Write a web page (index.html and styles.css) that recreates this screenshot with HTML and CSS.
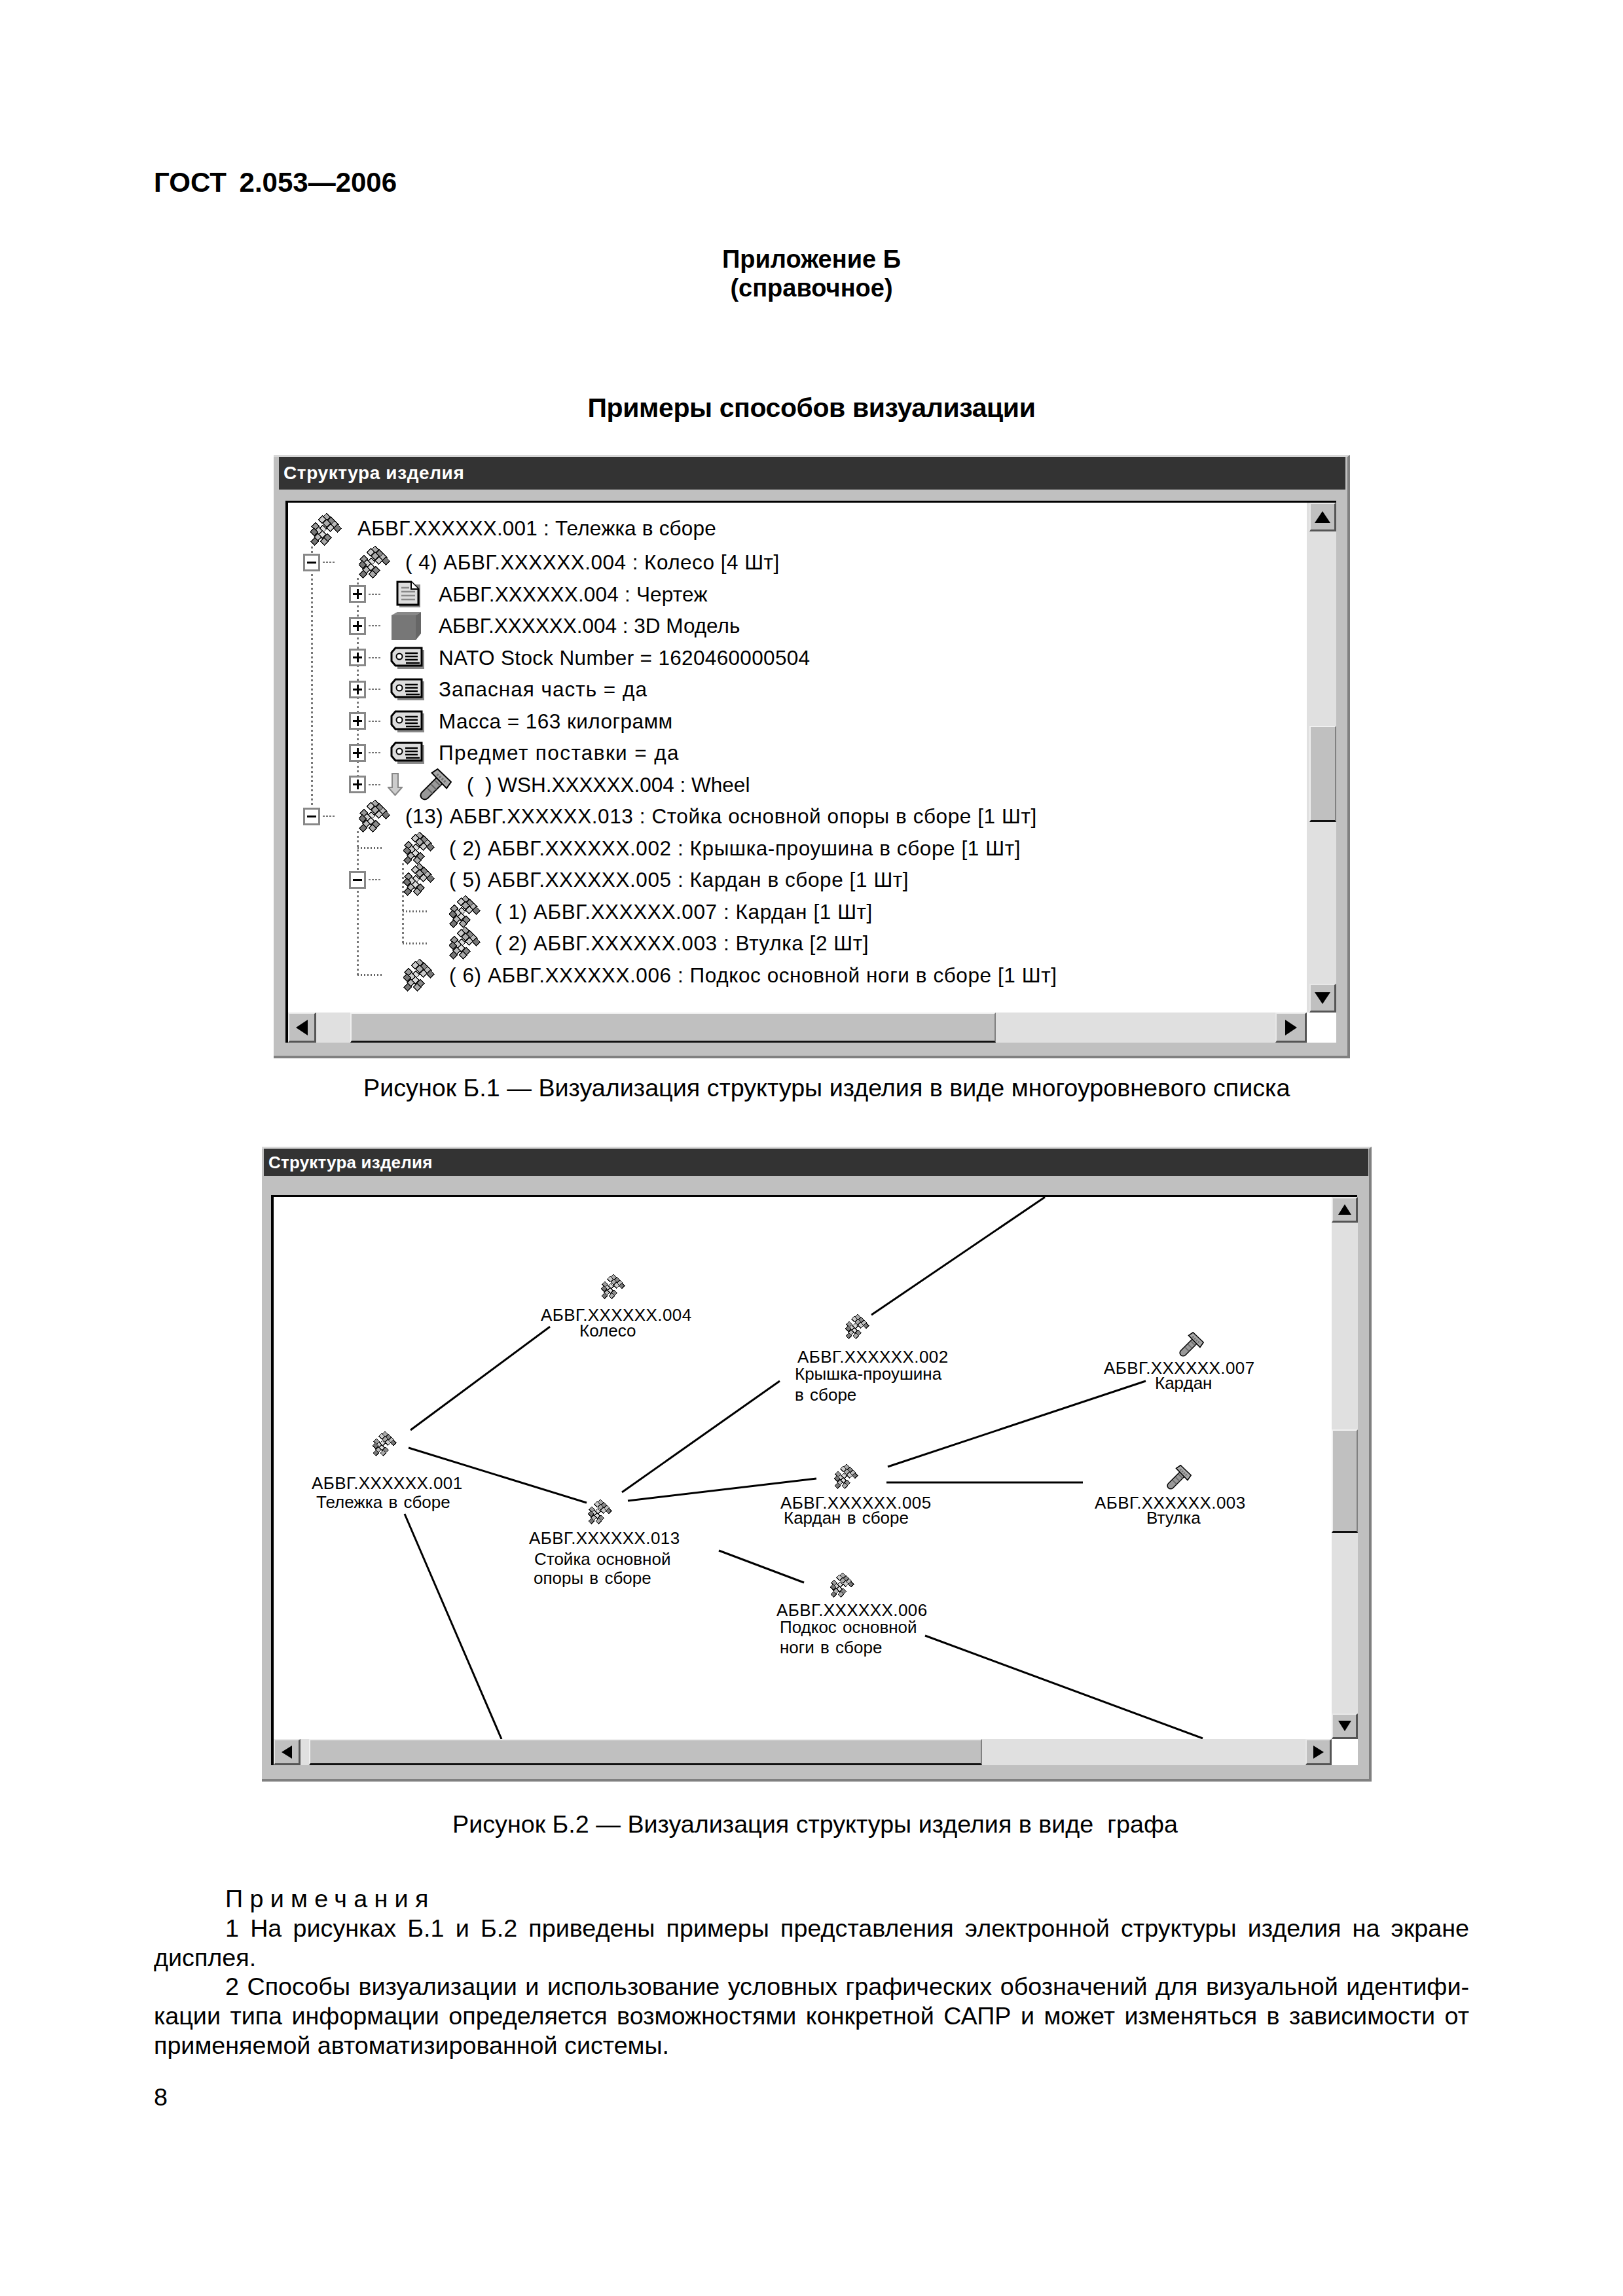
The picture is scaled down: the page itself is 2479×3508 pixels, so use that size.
FILE: index.html
```html
<!DOCTYPE html>
<html lang="ru">
<head>
<meta charset="utf-8">
<title>ГОСТ 2.053—2006</title>
<link rel="stylesheet" href="styles.css">
</head>
<body>
<svg class="defs" aria-hidden="true">
  <defs>
    <path id="dm" d="M0-6L6 0 0 6-6 0Z" stroke="#111" stroke-width="1.4"/>
    <symbol id="asm" viewBox="0 0 50 52" shape-rendering="crispEdges">
      <use href="#dm" x="26" y="6" fill="#aaa"/>
      <use href="#dm" x="33" y="12" fill="#888"/>
      <use href="#dm" x="39" y="18" fill="#bbb"/>
      <use href="#dm" x="43" y="24" fill="#777"/>
      <use href="#dm" x="19" y="10" fill="#ccc"/>
      <use href="#dm" x="26" y="16" fill="#aaa"/>
      <use href="#dm" x="32" y="23" fill="#ccc"/>
      <use href="#dm" x="8" y="21" fill="#999"/>
      <use href="#dm" x="20" y="25" fill="#ddd"/>
      <use href="#dm" x="13" y="28" fill="#ccc"/>
      <use href="#dm" x="6" y="30" fill="#777"/>
      <use href="#dm" x="19" y="34" fill="#ddd"/>
      <use href="#dm" x="12" y="38" fill="#bbb"/>
      <use href="#dm" x="27" y="39" fill="#888"/>
      <use href="#dm" x="7" y="45" fill="#777"/>
      <use href="#dm" x="22" y="45" fill="#aaa"/>
    </symbol>
    <symbol id="bolt" viewBox="0 0 50 50">
      <path d="M33 17L8 42" stroke="#000" stroke-width="15" stroke-linecap="round"/>
      <path d="M33 17L8 42" stroke="#999" stroke-width="11" stroke-linecap="round"/>
      <path d="M12 31l8 8M18 25l8 8M24 19l8 8" stroke="#666" stroke-width="2"/>
      <path d="M19 7L28 1 49 21 42 31Z" fill="#aaa" stroke="#000" stroke-width="2"/>
      <path d="M27 9l15 14" stroke="#777" stroke-width="4" stroke-dasharray="3 2"/>
    </symbol>
    <symbol id="doc" viewBox="0 0 38 42">
      <path d="M5 6H37V41H5Z" fill="#888"/>
      <path d="M2 2H23L34 13V37H2Z" fill="#ddd" stroke="#000" stroke-width="3"/>
      <path d="M23 2V13H34" fill="#fff" stroke="#000" stroke-width="2"/>
      <path d="M8 11H20M8 17H29M8 23H29M8 29H29" stroke="#888" stroke-width="2.5"/>
    </symbol>
    <symbol id="model" viewBox="0 0 45 43">
      <path d="M0 5H37V43H0Z" fill="#777"/>
      <path d="M0 5L9 0H45L37 5Z" fill="#888"/>
      <path d="M37 5L45 0V33L37 43Z" fill="#666"/>
    </symbol>
    <symbol id="tag" viewBox="0 0 52 34">
      <path d="M11 5H52V34H11Z" fill="#888"/>
      <path d="M8 2H48V29H8L2 22V9Z" fill="#ddd" stroke="#000" stroke-width="3"/>
      <circle cx="14" cy="15" r="4.5" fill="#fff" stroke="#000" stroke-width="2"/>
      <path d="M23 10H42M23 15H42M23 20H42M24 25H45" stroke="#000" stroke-width="2.5"/>
    </symbol>
    <symbol id="down" viewBox="0 0 23 35">
      <path d="M7 1H16V22H22L11.5 34 1 22H7Z" fill="#ccc" stroke="#888" stroke-width="2"/>
    </symbol>
  </defs>
</svg>

<main class="page">
  <header class="standard">ГОСТ 2.053—2006</header>
  <div class="annex">Приложение Б<br>(справочное)</div>
  <h1 class="section">Примеры способов визуализации</h1>

  <section class="window win-tree">
    <div class="titlebar">Структура изделия</div>
    <div class="frame">
      <div class="view tree">
        <span class="vline v1"></span>
        <span class="vline v2"></span>
        <span class="vline v3"></span>
        <span class="vline v4"></span>

        <div class="row row-root l0"><svg class="ic ic-asm root-ic"><use href="#asm"/></svg><span class="sp2">АБВГ.XXXXXX.001 : Тележка в сборе</span></div>

        <div class="row l1"><i class="tog minus"></i><i class="dots"></i><svg class="ic ic-asm"><use href="#asm"/></svg><span class="sp5">( 4) АБВГ.XXXXXX.004 : Колесо [4 Шт]</span></div>

        <div class="row l2"><i class="tog plus"></i><i class="dots"></i><svg class="ic ic-doc"><use href="#doc"/></svg><span class="sp2">АБВГ.XXXXXX.004 : Чертеж</span></div>
        <div class="row l2"><i class="tog plus"></i><i class="dots"></i><svg class="ic ic-model"><use href="#model"/></svg><span>АБВГ.XXXXXX.004 : 3D Модель</span></div>
        <div class="row l2"><i class="tog plus"></i><i class="dots"></i><svg class="ic ic-tag"><use href="#tag"/></svg><span class="sp3">NATO Stock Number = 1620460000504</span></div>
        <div class="row l2"><i class="tog plus"></i><i class="dots"></i><svg class="ic ic-tag"><use href="#tag"/></svg><span class="sp10">Запасная часть = да</span></div>
        <div class="row l2"><i class="tog plus"></i><i class="dots"></i><svg class="ic ic-tag"><use href="#tag"/></svg><span class="sp5">Масса = 163 килограмм</span></div>
        <div class="row l2"><i class="tog plus"></i><i class="dots"></i><svg class="ic ic-tag"><use href="#tag"/></svg><span class="sp14">Предмет поставки = да</span></div>
        <div class="row l2"><i class="tog plus"></i><i class="dots"></i><svg class="ic ic-down"><use href="#down"/></svg><svg class="ic ic-bolt"><use href="#bolt"/></svg><span>(&nbsp;&nbsp;) WSH.XXXXXX.004 : Wheel</span></div>

        <div class="row l1"><i class="tog minus"></i><i class="dots"></i><svg class="ic ic-asm"><use href="#asm"/></svg><span class="sp6">(13) АБВГ.XXXXXX.013 : Стойка основной опоры в сборе [1 Шт]</span></div>

        <div class="row l3"><i class="hdots"></i><svg class="ic ic-asm sub-ic"><use href="#asm"/></svg><span class="sp6">( 2) АБВГ.XXXXXX.002 : Крышка-проушина в сборе [1 Шт]</span></div>
        <div class="row l2"><i class="tog minus"></i><i class="dots"></i><svg class="ic ic-asm sub-ic"><use href="#asm"/></svg><span class="sp6">( 5) АБВГ.XXXXXX.005 : Кардан в сборе [1 Шт]</span></div>
        <div class="row l4"><i class="hdots"></i><svg class="ic ic-asm sub-ic"><use href="#asm"/></svg><span class="sp6">( 1) АБВГ.XXXXXX.007 : Кардан [1 Шт]</span></div>
        <div class="row l4"><i class="hdots"></i><svg class="ic ic-asm sub-ic"><use href="#asm"/></svg><span class="sp6">( 2) АБВГ.XXXXXX.003 : Втулка [2 Шт]</span></div>
        <div class="row l3"><i class="hdots"></i><svg class="ic ic-asm sub-ic"><use href="#asm"/></svg><span class="sp6">( 6) АБВГ.XXXXXX.006 : Подкос основной ноги в сборе [1 Шт]</span></div>
      </div>
      <div class="vbar">
        <div class="btn arrow-up"></div>
        <div class="track track-top"></div>
        <div class="thumb thumb-v"></div>
        <div class="track track-fill"></div>
        <div class="btn arrow-down"></div>
      </div>
      <div class="hbar">
        <div class="btn arrow-left"></div>
        <div class="track track-start"></div>
        <div class="thumb thumb-h"></div>
        <div class="track track-fill"></div>
        <div class="btn arrow-right"></div>
      </div>
      <div class="corner"></div>
    </div>
  </section>
  <p class="caption cap-1">Рисунок Б.1 — Визуализация структуры изделия в виде многоуровневого списка</p>

  <section class="window win-graph">
    <div class="titlebar">Структура изделия</div>
    <div class="frame">
      <div class="view graph">
        <svg class="edges" viewBox="417 1829 1616 828">
          <g class="edge-lines">
            <line x1="626" y1="2185" x2="839" y2="2027"/>
            <line x1="623" y1="2212" x2="895" y2="2296"/>
            <line x1="617" y1="2313" x2="765" y2="2657"/>
            <line x1="949" y1="2280" x2="1190" y2="2110"/>
            <line x1="958" y1="2293" x2="1246" y2="2259"/>
            <line x1="1097" y1="2369" x2="1227" y2="2418"/>
            <line x1="1330" y1="2009" x2="1595" y2="1829"/>
            <line x1="1355" y1="2241" x2="1749" y2="2110"/>
            <line x1="1353" y1="2265" x2="1653" y2="2265"/>
            <line x1="1412" y1="2499" x2="1836" y2="2656"/>
          </g>
          <use href="#asm" x="917" y="1947" width="37" height="38"/>
          <use href="#asm" x="568" y="2187" width="37" height="38"/>
          <use href="#asm" x="897" y="2291" width="37" height="38"/>
          <use href="#asm" x="1290" y="2008" width="37" height="38"/>
          <use href="#asm" x="1273" y="2237" width="37" height="38"/>
          <use href="#asm" x="1267" y="2403" width="37" height="38"/>
          <use href="#bolt" x="1800" y="2035" width="38" height="38"/>
          <use href="#bolt" x="1781" y="2238" width="38" height="38"/>
        </svg>
        <div class="lbl code a004">АБВГ.XXXXXX.004</div>
        <div class="lbl b004">Колесо</div>
        <div class="lbl code a001">АБВГ.XXXXXX.001</div>
        <div class="lbl b001">Тележка в сборе</div>
        <div class="lbl code a013">АБВГ.XXXXXX.013</div>
        <div class="lbl b013">Стойка основной</div>
        <div class="lbl c013">опоры в сборе</div>
        <div class="lbl code a002">АБВГ.XXXXXX.002</div>
        <div class="lbl b002">Крышка-проушина</div>
        <div class="lbl c002">в сборе</div>
        <div class="lbl code a007">АБВГ.XXXXXX.007</div>
        <div class="lbl b007">Кардан</div>
        <div class="lbl code a005">АБВГ.XXXXXX.005</div>
        <div class="lbl b005">Кардан в сборе</div>
        <div class="lbl code a003">АБВГ.XXXXXX.003</div>
        <div class="lbl b003">Втулка</div>
        <div class="lbl code a006">АБВГ.XXXXXX.006</div>
        <div class="lbl b006">Подкос основной</div>
        <div class="lbl c006">ноги в сборе</div>
      </div>
      <div class="vbar">
        <div class="btn arrow-up"></div>
        <div class="track track-top"></div>
        <div class="thumb thumb-v"></div>
        <div class="track track-fill"></div>
        <div class="btn arrow-down"></div>
      </div>
      <div class="hbar">
        <div class="btn arrow-left"></div>
        <div class="track track-start"></div>
        <div class="thumb thumb-h"></div>
        <div class="track track-fill"></div>
        <div class="btn arrow-right"></div>
      </div>
      <div class="corner"></div>
    </div>
  </section>
  <p class="caption cap-2">Рисунок Б.2 — Визуализация структуры изделия в виде&nbsp; графа</p>

  <div class="notes">
    <p class="note-title">Примечания</p>
    <p class="note">1 На рисунках Б.1 и Б.2 приведены примеры представления электронной структуры изделия на экране дисплея.</p>
    <p class="note">2 Способы визуализации и использование условных графических обозначений для визуальной идентифи&shy;кации типа информации определяется возможностями конкретной САПР и может изменяться в зависимости от применяемой автоматизированной системы.</p>
  </div>
  <footer class="pageno">8</footer>
</main>
</body>
</html>
```
FILE: styles.css
```css
* { box-sizing: border-box; }
html, body { margin: 0; padding: 0; background: #fff; color: #000; }
body { font-family: "Liberation Sans", Arial, sans-serif; }
.defs { position: absolute; width: 0; height: 0; overflow: hidden; }

.page { width: 2479px; height: 3508px; padding: 255px 235px 0; font-size: 37.7px; overflow: hidden; }

.standard { font-size: 42px; line-height: 48px; font-weight: 700; word-spacing: 8px; }
.annex { margin-top: 70.5px; text-align: center; font-size: 38px; line-height: 44px; font-weight: 700; }
.section { margin: 138.5px 0 0; text-align: center; font-size: 41px; line-height: 46px; font-weight: 700; letter-spacing: -0.4px; }

.caption { margin: 0; font-size: 37.7px; line-height: 44px; white-space: nowrap; }
.cap-1 { margin: 22.5px 0 0 320px; }
.cap-2 { margin: 42.5px 0 0 456px; }

.notes { margin-top: 70.5px; font-size: 37.7px; line-height: 44.8px; }
.notes p { margin: 0; }
.note-title { padding-left: 109px; letter-spacing: 10.3px; }
.note { text-indent: 109px; text-align: justify; hyphens: manual; }
.pageno { margin-top: 34px; font-size: 37.7px; line-height: 44.8px; }

/* window chrome */
.window { background: #c0c0c0; border-top: 3px solid #d8d8d8; border-right: 4px solid #808080; border-bottom: 4px solid #808080; }
.titlebar { background: #333; color: #fff; font-weight: 700; display: flex; align-items: center; }
.frame { display: grid; border-top: 3px solid #000; border-left: 4px solid #000; }
.view { background: #fff; position: relative; overflow: hidden; }
.vbar { background: #e0e0e0; display: flex; flex-direction: column; }
.hbar { background: #e0e0e0; display: flex; }
.corner { background: #fff; }
.track { background: #e0e0e0; flex: none; }
.track-fill { flex: 1; }

.btn { position: relative; flex: none; background: #c0c0c0; border-top: 2px solid #e8e8e8; border-left: 2px solid #e8e8e8; border-right: 3px solid #555; border-bottom: 3px solid #555; }
.btn::after { content: ""; position: absolute; left: 50%; top: 50%; width: 0; height: 0; transform: translate(-50%, -50%); border-style: solid; border-color: transparent; }
.arrow-up::after { border-width: 0 var(--half) var(--long); border-bottom-color: #000; }
.arrow-down::after { border-width: var(--long) var(--half) 0; border-top-color: #000; }
.arrow-left::after { border-width: var(--half) var(--long) var(--half) 0; border-right-color: #000; }
.arrow-right::after { border-width: var(--half) 0 var(--half) var(--long); border-left-color: #000; }

.thumb { flex: none; background: #c0c0c0; border-top: 2px solid #f0f0f0; border-left: 2px solid #f0f0f0; border-right: 2px solid #808080; border-bottom: 3px solid #111; }

/* first window: tree */
.win-tree { width: 1644px; height: 922px; margin: 49px 0 0 183px; padding-left: 8px; --half: 12px; --long: 18px; }
.win-tree .titlebar { width: 1629px; height: 50px; padding-left: 7px; font-size: 28px; letter-spacing: 0.6px; }
.win-tree .frame { width: 1605px; height: 828px; margin: 17px 0 0 10px; grid-template-columns: 1556px 45px; grid-template-rows: 779px 46px; }
.win-tree .vbar .btn { height: 44px; margin-left: 4px; }
.win-tree .track-top { height: 297px; }
.win-tree .thumb-v { height: 147px; margin-left: 4px; }
.win-tree .hbar .btn { height: 46px; }
.win-tree .arrow-left { width: 43px; }
.win-tree .track-start { width: 52px; }
.win-tree .thumb-h { width: 986px; }
.win-tree .arrow-right { width: 48px; }

/* tree rows */
.tree { padding-top: 11px; font-size: 31.5px; line-height: 48.5px; white-space: nowrap; }
.row { position: relative; height: 48.5px; display: flex; align-items: center; }
.row-root { height: 56px; }
.sp2 { letter-spacing: 0.2px; }
.sp3 { letter-spacing: 0.33px; }
.sp5 { letter-spacing: 0.47px; }
.sp6 { letter-spacing: 0.58px; }
.sp10 { letter-spacing: 1px; }
.sp14 { letter-spacing: 1.4px; }
.l0 { padding-left: 34px; }
.l1 { padding-left: 23px; }
.l2 { padding-left: 93px; }
.l3 { padding-left: 106px; }
.l4 { padding-left: 175px; }

.tog { position: relative; flex: none; width: 26px; height: 27px; background: #fff; border: 3px solid #888; }
.tog::before { content: ""; position: absolute; left: 3px; right: 3px; top: 9px; height: 3px; background: #000; }
.plus::after { content: ""; position: absolute; top: 3px; bottom: 3px; left: 8.5px; width: 3px; background: #000; }
.dots { flex: none; width: 20px; height: 2px; margin-left: 4px; background: repeating-linear-gradient(90deg, #777 0 3px, transparent 3px 5px); }
.hdots { flex: none; height: 3px; background: repeating-linear-gradient(90deg, #666 0 2px, transparent 2px 5px); }
.l3 .hdots { width: 37px; }
.l4 .hdots { width: 38px; }

.vline { position: absolute; width: 3px; background: repeating-linear-gradient(180deg, #777 0 3px, transparent 3px 7px); }
.v1 { left: 35px; top: 67px; height: 398px; }
.v2 { left: 105px; top: 115px; height: 302px; }
.v3 { left: 105px; top: 502px; height: 220px; }
.v4 { left: 174px; top: 551px; height: 122px; }

.ic { flex: none; display: block; overflow: visible; }
.ic-asm { width: 48px; height: 50px; margin-left: 35px; margin-right: 23px; }
.root-ic { margin-left: 0; margin-top: 4px; margin-right: 24px; }
.sub-ic { margin-left: 33px; margin-right: 22px; }
.ic-doc { width: 38px; height: 42px; margin-left: 22px; margin-right: 27px; }
.ic-model { width: 45px; height: 43px; margin-left: 15px; margin-right: 27px; }
.ic-tag { width: 52px; height: 34px; margin-left: 13px; margin-right: 22px; }
.ic-down { width: 23px; height: 35px; margin-left: 9px; }
.ic-bolt { width: 49px; height: 49px; margin-left: 26px; margin-right: 23px; }

/* second window: graph */
.win-graph { width: 1695px; height: 970px; margin: 68.5px 0 0 165px; padding-left: 3px; --half: 10px; --long: 16px; }
.win-graph .titlebar { width: 1687px; height: 42px; padding-left: 7px; font-size: 26px; letter-spacing: 0.2px; }
.win-graph .frame { width: 1659px; height: 871px; margin: 29px 0 0 11px; grid-template-columns: 1616px 40px; grid-template-rows: 828px 40px; }
.win-graph .vbar .btn { height: 39px; }
.win-graph .track-top { height: 316px; }
.win-graph .thumb-v { height: 158px; }
.win-graph .hbar .btn { height: 40px; }
.win-graph .arrow-left { width: 41px; }
.win-graph .track-start { width: 13px; }
.win-graph .thumb-h { width: 1028px; }
.win-graph .arrow-right { width: 40px; }

.edges { position: absolute; left: 0; top: 0; width: 1616px; height: 828px; }
.edge-lines { stroke: #000; stroke-width: 3; }
.lbl { position: absolute; font-size: 26px; line-height: 26px; white-space: nowrap; word-spacing: 2px; }
.code { letter-spacing: 0.4px; margin-left: -1px; }
.a004 { left: 409px; top: 167px; }
.b004 { left: 467px; top: 191px; }
.a001 { left: 59px; top: 424px; }
.b001 { left: 65px; top: 453px; }
.a013 { left: 391px; top: 508px; }
.b013 { left: 398px; top: 540px; }
.c013 { left: 397px; top: 569px; }
.a002 { left: 801px; top: 231px; }
.b002 { left: 796px; top: 257px; }
.c002 { left: 796px; top: 289px; }
.a007 { left: 1269px; top: 248px; }
.b007 { left: 1346px; top: 271px; }
.a005 { left: 775px; top: 454px; }
.b005 { left: 779px; top: 477px; }
.a003 { left: 1255px; top: 454px; }
.b003 { left: 1333px; top: 477px; }
.a006 { left: 769px; top: 618px; }
.b006 { left: 773px; top: 644px; }
.c006 { left: 773px; top: 675px; }
```
